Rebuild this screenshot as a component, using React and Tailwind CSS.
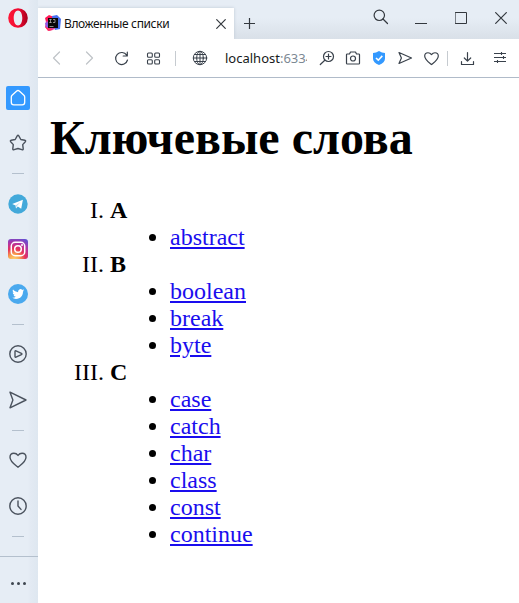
import React from "react";

function Cell({ className, children }) {
  return <div className={"flex shrink-0 items-center justify-center " + className}>{children}</div>;
}

function Icon({ size = 20, className = "", sw = 1.3, children }) {
  return (
    <svg
      width={size}
      height={size}
      viewBox={`0 0 ${size} ${size}`}
      fill="none"
      stroke="currentColor"
      strokeWidth={sw}
      strokeLinejoin="round"
      strokeLinecap="round"
      className={"shrink-0 " + className}
    >
      {children}
    </svg>
  );
}

const Heart = () => (
  <path d="M10 17.2C7 14.8 2 11.600 2 7.200C2 4.700 3.700 3.200 5.900 3.200C7.900 3.200 9.200 4.300 10 5.400C10.800 4.300 12.100 3.200 14.100 3.200C16.300 3.200 18 4.700 18 7.200C18 11.600 13 14.800 10 17.200Z" />
);

const Divider = ({ className }) => (
  <Cell className={className}>
    <div className="h-px w-3 bg-[#b4c0cd]" />
  </Cell>
);

function Sidebar() {
  return (
    <aside className="flex w-[38px] shrink-0 flex-col bg-[linear-gradient(90deg,#e6edf5_0,#e6edf5_28px,#e3eaf3_30px,#dee7f0_38px)] text-[#4b535e]">
      <Cell className="h-[36px] w-9">
        <svg width="20" height="20" viewBox="0 0 20 20">
          <defs>
            <linearGradient id="opera" x1="0" x2="1">
              <stop offset="0" stopColor="#ff1838" />
              <stop offset=".55" stopColor="#ee0930" />
              <stop offset="1" stopColor="#a5001c" />
            </linearGradient>
          </defs>
          <path fill="url(#opera)" fillRule="evenodd" d="M10 .2a9.8 9.8 0 1 0 0 19.6a9.8 9.8 0 1 0 0-19.6ZM10 2.500c2.500 0 4.300 3.100 4.300 7.500s-1.800 7.500-4.300 7.500S5.700 14.400 5.700 10S7.500 2.500 10 2.500Z" />
        </svg>
      </Cell>
      <Cell className="mt-[39px] h-[46px] w-9">
        <div className="flex h-6 w-6 items-center justify-center rounded-[2px] bg-[#3399ff] text-white">
          <Icon sw={1.3}>
            <path d="M3.300 9Q3.300 8 4.100 7.200L8.700 3Q10 2 11.300 3L15.900 7.200Q16.700 8 16.700 9V14.200Q16.700 16.800 14.200 16.800H5.800Q3.300 16.800 3.300 14.200Z" />
          </Icon>
        </div>
      </Cell>
      <Cell className="h-[44px] w-9">
        <Icon sw={1.4}>
          <path d="M9.200 2.800Q10 1.600 10.800 2.800L12.800 6.500L16.800 7.200Q18.200 7.600 17.300 8.700L14.700 11.600L15.200 15.700Q15.300 17.300 13.900 16.700L10 15.500L6.100 16.700Q4.700 17.300 4.800 15.700L5.300 11.600L2.700 8.700Q1.800 7.600 3.200 7.200L7.200 6.500Z" />
        </Icon>
      </Cell>
      <Divider className="h-[16px] w-9" />
      <Cell className="h-[46px] w-9">
        <svg width="20" height="20" viewBox="0 0 20 20">
          <circle cx="10" cy="10" r="9.700" fill="#43a9da" />
          <path d="M4.200 10L14.900 5.800L13.200 14.700L9.800 12.600L8 14.400L7.600 11.600Z" fill="#fff" />
          <path d="M7.600 11.600L12.700 7.900L8.600 12.200L8 14.400Z" fill="#b8d9eb" />
        </svg>
      </Cell>
      <Cell className="h-[44px] w-9">
        <svg width="20" height="20" viewBox="0 0 20 20">
          <defs>
            <radialGradient id="insta" cx=".3" cy="1.050" r="1.150">
              <stop offset="0" stopColor="#ffd776" />
              <stop offset=".25" stopColor="#f8a34e" />
              <stop offset=".5" stopColor="#e7315b" />
              <stop offset=".75" stopColor="#b134a4" />
              <stop offset="1" stopColor="#6650d0" />
            </radialGradient>
          </defs>
          <rect width="20" height="20" rx="3" fill="url(#insta)" />
          <g fill="none" stroke="#fff" strokeWidth="1.500">
            <rect x="3.300" y="3.300" width="13.400" height="13.400" rx="3.800" />
            <circle cx="10" cy="10" r="3.300" />
          </g>
          <circle cx="14" cy="6" r="1" fill="#fff" />
        </svg>
      </Cell>
      <Cell className="h-[46px] w-9">
        <svg width="20" height="20" viewBox="0 0 20 20">
          <circle cx="10" cy="10" r="10" fill="#4aa9ee" />
          <path transform="translate(4.200 4) scale(.5)" fill="#fff" d="M23.950 4.570a10 10 0 0 1-2.820.775 4.960 4.960 0 0 0 2.160-2.720c-.950.550-2 .950-3.120 1.180a4.920 4.920 0 0 0-8.380 4.480C7.690 8.100 4.070 6.130 1.640 3.160a4.820 4.820 0 0 0-.670 2.480c0 1.710.870 3.210 2.190 4.100a4.900 4.900 0 0 1-2.230-.620v.060a4.920 4.920 0 0 0 3.950 4.830 5 5 0 0 1-2.210.080 4.940 4.940 0 0 0 4.600 3.420A9.870 9.870 0 0 1 0 19.540a14 14 0 0 0 7.550 2.210c9.050 0 14-7.500 14-13.990v-.630a9.900 9.900 0 0 0 2.400-2.560Z" />
        </svg>
      </Cell>
      <Divider className="h-[14px] w-9" />
      <Cell className="h-[46px] w-[35px]">
        <Icon sw={1.4}>
          <circle cx="10" cy="10" r="8.200" />
          <path d="M7 7.500Q7 6.500 8 6.900L13.400 9.300Q14.400 10 13.400 10.700L8 13.100Q7 13.500 7 12.500Z" />
        </Icon>
      </Cell>
      <Cell className="h-[46px] w-[35px]">
        <Icon sw={1.4}>
          <path d="M2 2.200L18 10L2 17.800L4.900 10Z" />
        </Icon>
      </Cell>
      <Divider className="h-[14px] w-9" />
      <Cell className="h-[46px] w-[35px]">
        <Icon sw={1.4}><Heart /></Icon>
      </Cell>
      <Cell className="h-[45px] w-[35px]">
        <Icon sw={1.4}>
          <circle cx="10" cy="10" r="8.200" />
          <path d="M10 5V10L13 13.400" />
        </Icon>
      </Cell>
      <Divider className="h-[16px] w-9" />
      <div className="mt-3 h-px shrink-0 bg-[#b4c0cd]" />
      <Cell className="h-[46px] w-9 gap-[3px] pt-[6px]">
        <i className="h-[3px] w-[3px] rounded-full bg-[#3e4650]" />
        <i className="h-[3px] w-[3px] rounded-full bg-[#3e4650]" />
        <i className="h-[3px] w-[3px] rounded-full bg-[#3e4650]" />
      </Cell>
    </aside>
  );
}

function TabStrip() {
  return (
    <div className="flex h-[39px] shrink-0 items-start bg-[linear-gradient(180deg,#e6edf5_0,#e6edf5_18px,#d9e0e8_39px)] text-[#33383e]">
      <div className="mt-2 flex h-[31px] w-[196px] shrink-0 items-center bg-white pl-[7px] shadow-[0_0_3px_#bec8d3] [clip-path:inset(-4px_-4px_0_0)]">
        <svg width="16" height="16" viewBox="0 0 16 16" className="mb-[2px] shrink-0">
          <path d="M0 3L4 0L9 2L5 8L1 7Z" fill="#ff1857" />
          <path d="M7 1L12 0L16 4L15 14L10 15L8 8Z" fill="#466ff0" />
          <path d="M1 6L6 5L10 14L4 16L0 12Z" fill="#db3b9a" />
          <path d="M0 8L3 7L4 13L2 14Z" fill="#8c5be8" />
          <path d="M0 12L5 13L8 15L3 16Z" fill="#ff3264" />
          <rect x="3" y="3" width="10" height="10" fill="#080808" />
          <path d="M4.300 4.500H6.700M5.500 4.500V7.500M4.300 7.500H6.700M8 4.500H10V7.500H8M4.500 11.500H8.500" fill="none" stroke="#ddd" strokeWidth=".6" />
        </svg>
        <span className="ml-[3px] w-[147px] whitespace-nowrap font-['Noto_Sans','Open_Sans',sans-serif] text-[12px] leading-4 tracking-[-0.370px] text-[#111]">
          Вложенные списки
        </span>
        <Icon size={12} sw={1.200} className="ml-1">
          <path d="M1.700 1.700L10.300 10.300M10.300 1.700L1.700 10.300" />
        </Icon>
      </div>
      <Cell className="h-[45px] w-[31px]">
        <Icon size={12} sw={1.200}>
          <path strokeLinecap="butt" d="M0 6.500H11M5.500 1V12" />
        </Icon>
      </Cell>
      <div className="flex-1" />
      <Cell className="h-[34px] w-10">
        <Icon size={16} sw={1.200}>
          <circle cx="6.300" cy="6.300" r="5.200" />
          <path d="M10 10L14.500 14.500" />
        </Icon>
      </Cell>
      <Cell className="h-9 w-10"><Icon size={12} sw={1}><path strokeLinecap="butt" d="M0 11.500H12" /></Icon></Cell>
      <Cell className="h-9 w-10"><Icon size={12} sw={1}><path strokeLinejoin="miter" d="M.500 .500H11.500V11.500H.500Z" /></Icon></Cell>
      <Cell className="h-9 w-[38px] pl-[2px]"><Icon size={12} sw={1.200}><path strokeLinecap="butt" d="M.300 .300L11.700 11.700M11.700 .300L.300 11.700" /></Icon></Cell>
    </div>
  );
}

function Toolbar() {
  return (
    <div className="flex h-[39px] shrink-0 items-center border-b border-[#b0bbc9] bg-white pl-[3px] text-[#39414b]">
      <Cell className="w-8 text-[#bfc3c7]"><Icon size={14} sw={1.200}><path d="M9.500 1L3.500 7L9.500 13" /></Icon></Cell>
      <Cell className="w-8 text-[#bfc3c7]"><Icon size={14} sw={1.200}><path d="M4.500 1L10.500 7L4.500 13" /></Icon></Cell>
      <Cell className="w-[33px]">
        <Icon size={15} sw={1.200}>
          <path d="M12.700 4.200A6 6 0 1 0 13.500 9M13.300 1.200V5H9.200" />
        </Icon>
      </Cell>
      <Cell className="w-[31px]">
        <Icon size={15} sw={1.100}>
          <rect x="1.500" y="2" width="4.800" height="4.300" rx="1" />
          <rect x="8.700" y="2" width="4.800" height="4.300" rx="1" />
          <rect x="1.500" y="8.700" width="4.800" height="4.300" rx="1" />
          <rect x="8.700" y="8.700" width="4.800" height="4.300" rx="1" />
        </Icon>
      </Cell>
      <Cell className="w-[13px]"><div className="h-[15px] w-px bg-[#c6cbd0]" /></Cell>
      <Cell className="w-9">
        <Icon size={16} sw={1}>
          <circle cx="8" cy="8" r="6.700" />
          <ellipse cx="8" cy="8" rx="3.300" ry="6.700" />
          <path d="M1.300 8H14.700M2.500 4.500H13.500M2.500 11.500H13.500M8 1.300V14.700" />
        </Icon>
      </Cell>
      <div className="w-[89px] shrink-0 overflow-hidden whitespace-nowrap pl-[7px] font-['Noto_Sans','Open_Sans',sans-serif] text-[13px] leading-5 text-[#161a20]">
        localhost<span className="text-[#7c8893]">:6334</span>
      </div>
      <Cell className="ml-[7px] w-[26px]">
        <Icon size={16} sw={1.200}>
          <circle cx="9.500" cy="6.500" r="5" />
          <path d="M5.800 10.200L1.300 14.500M7 6.500H12M9.500 4V9" />
        </Icon>
      </Cell>
      <Cell className="w-[26px]">
        <Icon size={16} sw={1.200}>
          <path d="M2.300 4H4.500L5.500 2H10.500L11.500 4H13.700Q14.500 4 14.500 4.800V13.200Q14.500 14 13.700 14H2.300Q1.500 14 1.500 13.200V4.800Q1.500 4 2.300 4Z" />
          <circle cx="8" cy="8.500" r="2.500" />
        </Icon>
      </Cell>
      <Cell className="w-[26px]">
        <svg width="16" height="16" viewBox="0 0 16 16">
          <path d="M8 1Q11 3 14 3V8.500Q14 12.500 8 15Q2 12.500 2 8.500V3Q5 3 8 1Z" fill="#3399ff" />
          <path d="M5 8L7.300 10.200L11.300 5.900" fill="none" stroke="#fff" strokeWidth="1.600" />
        </svg>
      </Cell>
      <Cell className="w-[26px]"><Icon size={16} sw={1.200}><path d="M2 2.500L14.500 8L2 13.500L4.400 8Z" /></Icon></Cell>
      <Cell className="w-[26px]">
        <svg width="17" height="17" viewBox="0 0 20 20" fill="none" stroke="currentColor" strokeWidth="1.400" strokeLinejoin="round"><Heart /></svg>
      </Cell>
      <Cell className="w-[7px]"><div className="h-[15px] w-px bg-[#c6cbd0]" /></Cell>
      <Cell className="w-[33px]">
        <Icon size={15} sw={1.200}><path d="M1.500 10.500V13.500H13.500V10.500M7.500 1.500V10M4.300 7L7.500 10.200L10.700 7" /></Icon>
      </Cell>
      <Cell className="w-8">
        <Icon size={14} sw={1.100}>
          <path strokeLinecap="butt" d="M1 2.500H13M1 6.500H13M1 10.500H13M8.500 1V4M10.500 5V8M4.500 9V12" />
        </Icon>
      </Cell>
    </div>
  );
}

const sections = [
  { letter: "A", words: ["abstract"] },
  { letter: "B", words: ["boolean", "break", "byte"] },
  { letter: "C", words: ["case", "catch", "char", "class", "const", "continue"] },
];

function Page() {
  return (
    <main className="flex-1 bg-white px-3 pt-8 font-['Liberation_Serif',serif] text-[24px] leading-[27px] text-black">
      <h1 className="mb-8 whitespace-nowrap text-[48px] font-bold leading-[55px]">Ключевые слова</h1>
      <ol className="list-[upper-roman] pl-[60px]">
        {sections.map((s) => (
          <li key={s.letter}>
            <b>{s.letter}</b>
            <ul className="list-disc pl-[60px]">
              {s.words.map((w) => (
                <li key={w}>
                  <a href="#" className="text-[#1a0dee] underline">{w}</a>
                </li>
              ))}
            </ul>
          </li>
        ))}
      </ol>
    </main>
  );
}

export default function App() {
  return (
    <div className="flex h-[603px] w-[519px] overflow-hidden bg-white">
      <Sidebar />
      <div className="flex min-w-0 flex-1 flex-col">
        <TabStrip />
        <Toolbar />
        <Page />
      </div>
    </div>
  );
}
